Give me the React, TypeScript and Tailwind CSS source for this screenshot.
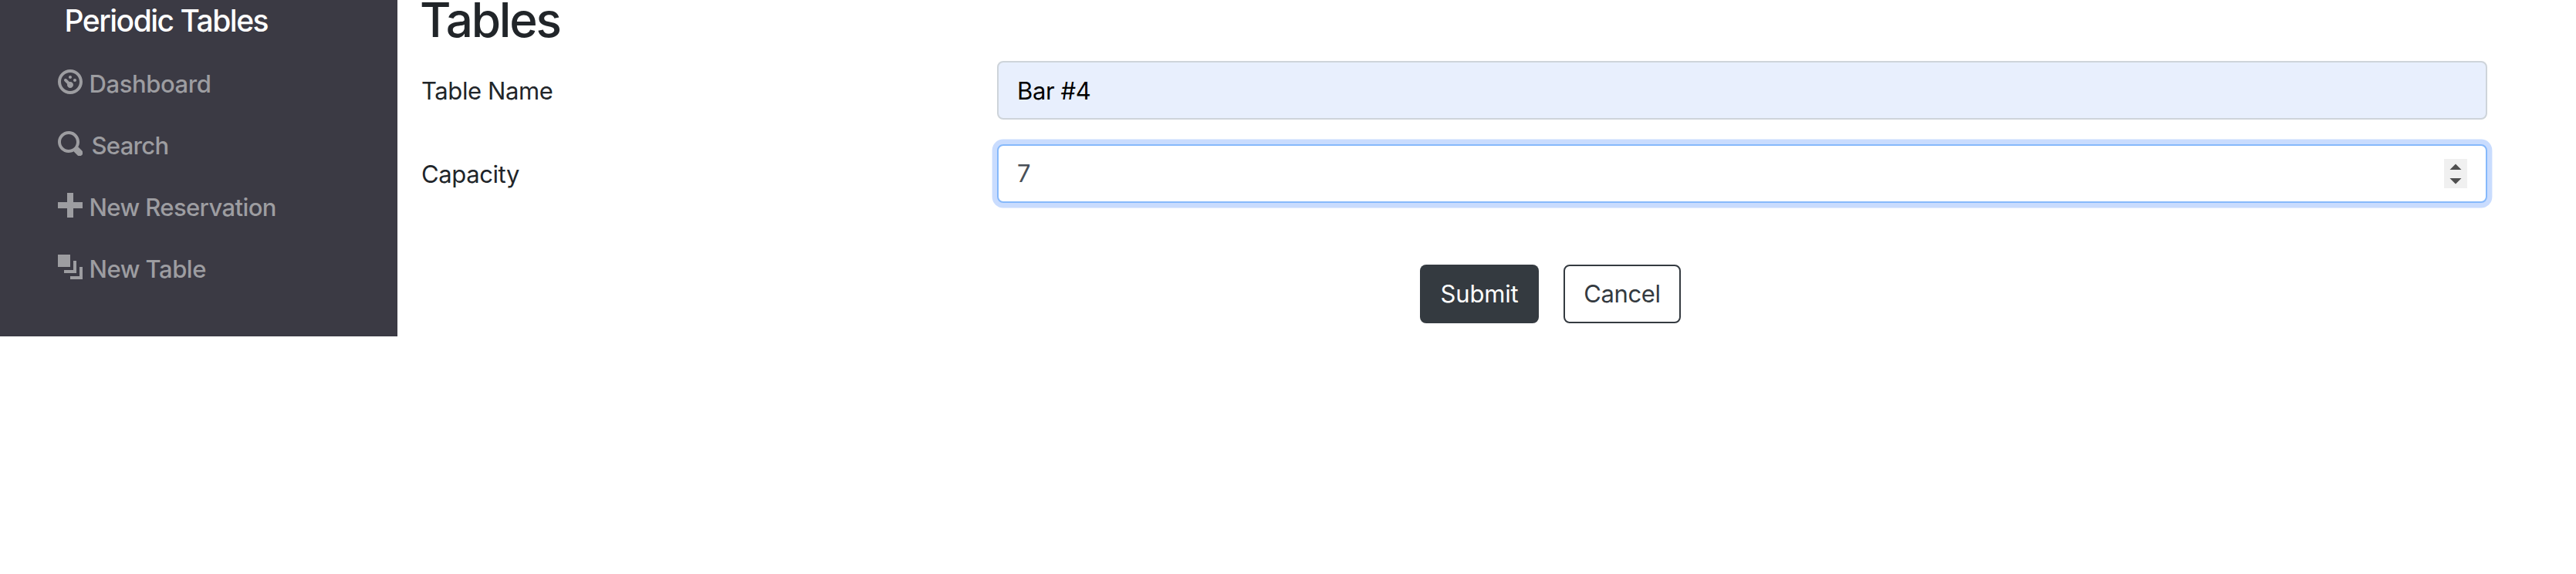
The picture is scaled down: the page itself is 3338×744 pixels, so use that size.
import type { ReactNode } from "react";

const icons = {
  dashboard:
    "M4 0c-2.2 0-4 1.8-4 4s1.8 4 4 4 4-1.8 4-4-1.8-4-4-4zm0 1c1.66 0 3 1.34 3 3s-1.34 3-3 3-3-1.34-3-3 1.34-3 3-3zm0 1c-.28 0-.5.22-.5.5s.22.5.5.5.5-.22.5-.5-.22-.5-.5-.5zm-1.66 1a.5.5 0 0 0-.19.84l.91.91c-.02.08-.06.16-.06.25 0 .55.45 1 1 1s1-.45 1-1-.45-1-1-1c-.09 0-.17.04-.25.06l-.91-.91a.5.5 0 0 0-.44-.16.5.5 0 0 0-.06 0zm3.16 0c-.28 0-.5.22-.5.5s.22.5.5.5.5-.22.5-.5-.22-.5-.5-.5z",
  search:
    "M3.5 0c-1.93 0-3.5 1.57-3.5 3.5s1.57 3.5 3.5 3.5c.59 0 1.17-.14 1.66-.41a1 1 0 0 0 .13.13l1 1a1.02 1.02 0 1 0 1.44-1.44l-1-1a1 1 0 0 0-.16-.13c.27-.49.44-1.06.44-1.66 0-1.93-1.55-3.5-3.5-3.5zm0 1c1.39 0 2.5 1.11 2.5 2.5 0 .66-.24 1.27-.66 1.72-.01.01-.02.02-.03.03a1 1 0 0 0-.13.13c-.44.4-1.04.63-1.69.63-1.39 0-2.5-1.11-2.5-2.5s1.11-2.5 2.5-2.5z",
  plus: "M3 0v3h-3v2h3v3h2v-3h3v-2h-3v-3h-2z",
  layers:
    "M0 0v4h4v-4h-4zm5 2v3h-3v1h4v-4h-1zm2 2v3h-3v1h4v-4h-1z",
};

function NavItem({ icon, children }: { icon: string; children: ReactNode }) {
  return (
    <li className="h-20">
      <a className="flex items-start text-[31px] leading-[37px] text-[#9d9da1]" href="#">
        <svg className="size-8 shrink-0 fill-current" viewBox="0 0 8 8">
          <path d={icon} />
        </svg>
        {children}
      </a>
    </li>
  );
}

function Row({ label, children }: { label: string; children: ReactNode }) {
  return (
    <div className="mb-8 flex h-[76px] items-center">
      <label className="w-[746px] shrink-0 pt-0.5 text-[31px] leading-[48px]">{label}</label>
      {children}
    </div>
  );
}

export default function App() {
  return (
    <div className="flex h-[744px] items-start overflow-hidden bg-white font-[Inter,sans-serif] font-[430] tracking-[-0.4px] text-[#212529]">
      <nav className="h-[436px] w-[515px] shrink-0 bg-[#3b3a44] pl-[74.5px] font-[450]">
        <div className="h-[90px] pl-[9px] text-[39px] leading-[54px] tracking-[-1.5px] text-white">
          Periodic Tables
        </div>
        <ul>
          <NavItem icon={icons.dashboard}>
            <span className="ml-[9px] tracking-[-0.4px]">Dashboard</span>
          </NavItem>
          <NavItem icon={icons.search}>
            <span className="ml-[12px] tracking-[-0.7px]">Search</span>
          </NavItem>
          <NavItem icon={icons.plus}>
            <span className="ml-[9px] tracking-[-0.6px]">New Reservation</span>
          </NavItem>
          <NavItem icon={icons.layers}>
            <span className="ml-[9px] tracking-[-0.5px]">New Table</span>
          </NavItem>
        </ul>
      </nav>
      <main className="w-[2708px] pl-[31px]">
        <h1 className="-ml-0.5 h-[79px] text-[62px] leading-[51px] font-medium tracking-[-2.2px]">
          Tables
        </h1>
        <form>
          <Row label="Table Name">
            <input
              className="h-[76px] min-w-0 flex-1 rounded-lg border-2 border-[#ced4da] bg-[#e8effd] px-6 text-[31px] text-black outline-none"
              defaultValue="Bar #4"
            />
          </Row>
          <Row label="Capacity">
            <div className="flex h-[76px] min-w-0 flex-1 items-center rounded-lg border-2 border-[#86b9fb] bg-white px-6 shadow-[0_0_0_6.4px_#c9dcfe]">
              <input
                className="min-w-0 flex-1 text-[31px] text-[#495057] outline-none"
                inputMode="numeric"
                defaultValue="7"
              />
              <svg className="h-[38px] w-[30px]" viewBox="0 0 30 38">
                <path fill="#f0f0f0" d="M0 0h30v38H0z" />
                <path fill="#4f4f4f" d="M15 6.5 22.5 14h-15zM7.5 25h15L15 32.5z" />
              </svg>
            </div>
          </Row>
          <div className="flex gap-8 pt-12 pl-[1294px]">
            <button
              type="button"
              className="h-[76px] w-[154px] rounded-lg bg-[#343a40] text-[31px] tracking-[-0.2px] text-white"
            >
              Submit
            </button>
            <button
              type="button"
              className="h-[76px] w-[152px] rounded-lg border-2 border-[#343a40] text-[31px] text-[#343a40]"
            >
              Cancel
            </button>
          </div>
        </form>
      </main>
    </div>
  );
}
